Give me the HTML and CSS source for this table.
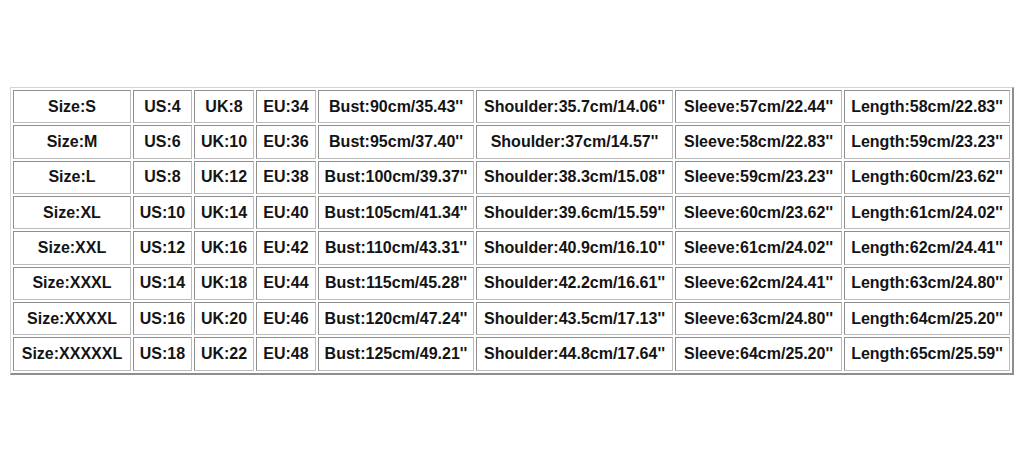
FILE: index.html
```html
<!DOCTYPE html>
<html>
<head>
<meta charset="utf-8">
<link rel="stylesheet" href="styles.css">
</head>
<body>
<div class="wrap">
<table class="size-chart">
<colgroup>
<col class="c1"><col class="c2"><col class="c3"><col class="c4"><col class="c5"><col class="c6"><col class="c7"><col class="c8">
</colgroup>
<tbody>
<tr><td>Size:S</td><td>US:4</td><td>UK:8</td><td>EU:34</td><td>Bust:90cm/35.43''</td><td>Shoulder:35.7cm/14.06''</td><td>Sleeve:57cm/22.44''</td><td>Length:58cm/22.83''</td></tr>
<tr><td>Size:M</td><td>US:6</td><td>UK:10</td><td>EU:36</td><td>Bust:95cm/37.40''</td><td>Shoulder:37cm/14.57''</td><td>Sleeve:58cm/22.83''</td><td>Length:59cm/23.23''</td></tr>
<tr><td>Size:L</td><td>US:8</td><td>UK:12</td><td>EU:38</td><td>Bust:100cm/39.37''</td><td>Shoulder:38.3cm/15.08''</td><td>Sleeve:59cm/23.23''</td><td>Length:60cm/23.62''</td></tr>
<tr><td>Size:XL</td><td>US:10</td><td>UK:14</td><td>EU:40</td><td>Bust:105cm/41.34''</td><td>Shoulder:39.6cm/15.59''</td><td>Sleeve:60cm/23.62''</td><td>Length:61cm/24.02''</td></tr>
<tr><td>Size:XXL</td><td>US:12</td><td>UK:16</td><td>EU:42</td><td>Bust:110cm/43.31''</td><td>Shoulder:40.9cm/16.10''</td><td>Sleeve:61cm/24.02''</td><td>Length:62cm/24.41''</td></tr>
<tr><td>Size:XXXL</td><td>US:14</td><td>UK:18</td><td>EU:44</td><td>Bust:115cm/45.28''</td><td>Shoulder:42.2cm/16.61''</td><td>Sleeve:62cm/24.41''</td><td>Length:63cm/24.80''</td></tr>
<tr><td>Size:XXXXL</td><td>US:16</td><td>UK:20</td><td>EU:46</td><td>Bust:120cm/47.24''</td><td>Shoulder:43.5cm/17.13''</td><td>Sleeve:63cm/24.80''</td><td>Length:64cm/25.20''</td></tr>
<tr><td>Size:XXXXXL</td><td>US:18</td><td>UK:22</td><td>EU:48</td><td>Bust:125cm/49.21''</td><td>Shoulder:44.8cm/17.64''</td><td>Sleeve:64cm/25.20''</td><td>Length:65cm/25.59''</td></tr>
</tbody>
</table>
</div>
</body>
</html>
```

FILE: styles.css
```css
html, body {
  margin: 0;
  padding: 0;
  background: #ffffff;
}

.wrap {
  padding: 87px 0 0 10px;
}

.size-chart {
  table-layout: fixed;
  width: 1003px;
  border-collapse: separate;
  border-spacing: 2px;
  border-style: solid;
  border-width: 1px 2px 2px 1px;
  border-color: #d4d4d4 #8e8e8e #8e8e8e #d4d4d4;
  font-family: "Liberation Sans", Arial, sans-serif;
  font-weight: bold;
  font-size: 16px;
  color: #141414;
}

.c1 { width: 118px; }
.c2 { width: 59px; }
.c3 { width: 60px; }
.c4 { width: 60px; }
.c5 { width: 156px; }
.c6 { width: 197px; }
.c7 { width: 167px; }
.c8 { width: 166px; }

.size-chart td {
  box-sizing: border-box;
  height: 33.33px;
  padding: 0;
  text-align: center;
  vertical-align: middle;
  white-space: nowrap;
  border: 1px solid;
  border-color: #8f8f8f #bcbcbc #bcbcbc #8f8f8f;
}
```
